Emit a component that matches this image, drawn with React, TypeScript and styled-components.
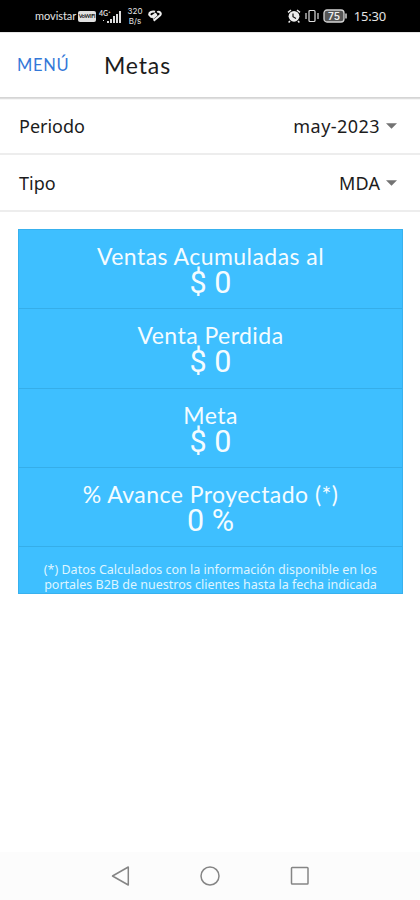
import React from "react";
import styled, { createGlobalStyle } from "styled-components";

const GlobalStyle = createGlobalStyle`
  * { box-sizing: border-box; }
  body { margin: 0; background: #fff; }
`;

const Screen = styled.div`
  width: 420px;
  height: 900px;
  display: flex;
  flex-direction: column;
  overflow: hidden;
  background: #fff;
  color: #1c1c1c;
  font-family: "Noto Sans", sans-serif;
`;

const StatusBar = styled.div`
  height: 32px;
  flex: none;
  padding: 0 34px 0 35px;
  display: flex;
  justify-content: space-between;
  background: #000;
  color: #e4e4e4;
`;

const StatusGroup = styled.div<{ $gap: number }>`
  display: flex;
  align-items: center;
  gap: ${(p) => p.$gap}px;
  svg { display: block; flex: none; }
`;

const Carrier = styled.span`
  width: 41px;
  font: 11px/14px Lato, sans-serif;
  letter-spacing: -0.05px;
  white-space: nowrap;
`;

const VoBadge = styled.span`
  width: 18px;
  height: 11px;
  border-radius: 2px;
  background: #e0e0e0;
  color: #111;
  font: 700 5.5px/11px Lato, sans-serif;
  letter-spacing: -0.2px;
  text-align: center;
  white-space: nowrap;
`;

const NetSpeed = styled.span`
  width: 16px;
  margin: 0 3px;
  font: 8px/10px Inter, sans-serif;
  text-align: center;
`;

const Clock = styled.span`
  margin-left: 3px;
  font: 13px/16px "Noto Sans", sans-serif;
  letter-spacing: -0.2px;
`;

const Header = styled.header`
  height: 65px;
  flex: none;
  padding-left: 17px;
  display: flex;
  align-items: center;
  border-top: 1px solid #e6e6e6;
`;

const MenuButton = styled.button`
  width: 87px;
  padding: 0;
  border: 0;
  background: none;
  color: #3478d8;
  font: 16.5px/24px Lato, sans-serif;
  letter-spacing: 0.7px;
  text-align: left;
`;

const Title = styled.h1`
  margin: 0;
  font: 400 23px/32px Lato, sans-serif;
  letter-spacing: 0.85px;
`;

const HeaderShadow = styled.div`
  height: 3px;
  flex: none;
  background: linear-gradient(#d5d5d5 0 1px, #dedede 1px 2px, #f6f6f6 2px);
`;

const FilterRow = styled.div<{ $height: number; $top?: number }>`
  height: ${(p) => p.$height}px;
  flex: none;
  padding: ${(p) => p.$top ?? 0}px 23px 1px 19px;
  display: flex;
  align-items: center;
  justify-content: space-between;
  border-bottom: 2px solid #ededed;
  font-size: 18px;
  line-height: 24px;
`;

const Value = styled.span<{ $spacing: number }>`
  display: flex;
  align-items: center;
  gap: 6px;
  letter-spacing: ${(p) => p.$spacing}px;
`;

const Card = styled.section`
  width: 385px;
  height: 365px;
  margin: 17px 0 0 18px;
  flex: none;
  overflow: hidden;
  background: #3ebfff;
  border: 1px solid #38b1ee;
  color: #f4fcff;
  text-align: center;
`;

const Metric = styled.div`
  height: 79.25px;
  padding-top: 14px;
  border-bottom: 1px solid #35aee9;
`;

const MetricName = styled.div`
  font: 23px/25px Lato, sans-serif;
  letter-spacing: 0.45px;
`;

const MetricValue = styled.div`
  font: 30.5px/27px Roboto, sans-serif;
`;

const Note = styled.p`
  margin: 15px 0 0;
  font-size: 12.5px;
  line-height: 15px;
  color: #dff5ff;
  white-space: nowrap;
`;

const NavBar = styled.nav`
  height: 48px;
  flex: none;
  margin-top: auto;
  padding: 0 110px;
  display: flex;
  align-items: center;
  justify-content: space-between;
  background: #fcfcfc;
  svg { display: block; }
`;

const Caret = () => (
  <svg width="11" height="6" viewBox="0 0 11 6"><path d="M0 .2h11L5.5 5.8z" fill="#737373" /></svg>
);

const metrics = [
  ["Ventas Acumuladas al", "$ 0"],
  ["Venta Perdida", "$ 0"],
  ["Meta", "$ 0"],
  ["% Avance Proyectado (*)", "0 %"],
];

export default function App() {
  return (
    <Screen>
      <GlobalStyle />
      <StatusBar>
        <StatusGroup $gap={2}>
          <Carrier>movistar</Carrier>
          <VoBadge>VoWiFi</VoBadge>
          <svg width="24" height="15" viewBox="0 0 24 15" fill="#dcdcdc">
            <text x="1" y="6.5" fontFamily="Lato" fontWeight="700" fontSize="7">4G⁺</text>
            <path d="M5 11h1v1H5zM9 12h2v2H9zM12 10h2v4h-2zM15 7h2v7h-2zM18 5h2v9h-2zM21 2h2v12h-2z" />
          </svg>
          <NetSpeed>320 B/s</NetSpeed>
          <svg width="14" height="12" viewBox="0 0 14 12" fill="none" stroke="#eee" strokeWidth="2.1" strokeLinejoin="round">
            <path d="M7 1.8C4.5.8.8 2.2 1.3 4.8L3.2 6.8 7.4 3.8 8.3 5.2 4.6 8.3" />
            <path d="M5.6 10.6 12.2 5.2C13.6 3.2 11.6.9 9.2 2.2" />
          </svg>
        </StatusGroup>
        <StatusGroup $gap={4}>
          <svg width="14" height="14" viewBox="0 0 14 14">
            <circle cx="7" cy="7.3" r="5.4" fill="#eee" />
            <path d="m1 3.4 3-2.4M13 3.4 10 1M3 12l-1.4 1.5M11 12l1.4 1.5" stroke="#eee" strokeWidth="1.5" />
            <path d="M6 4.5v3.2l3 1.8" stroke="#111" strokeWidth="1.2" fill="none" />
          </svg>
          <svg width="14" height="14" viewBox="0 0 14 14" fill="none" stroke="#ddd" strokeWidth="1.2">
            <rect x="4" y="1.5" width="6" height="11" rx="1" />
            <path d="M1 4v6M13 4v6" />
          </svg>
          <svg width="24" height="14" viewBox="0 0 24 14">
            <rect x="1" y="1" width="20" height="12" rx="3" fill="#555" stroke="#d5d5d5" strokeWidth="1.3" />
            <path d="M23 4.5v5" stroke="#d5d5d5" strokeWidth="1.5" />
            <text x="11" y="10.8" textAnchor="middle" fill="#eee" fontFamily="Inter" fontWeight="600" fontSize="10">75</text>
          </svg>
          <Clock>15:30</Clock>
        </StatusGroup>
      </StatusBar>
      <Header>
        <MenuButton>MENÚ</MenuButton>
        <Title>Metas</Title>
      </Header>
      <HeaderShadow />
      <FilterRow $height={55}>
        <span>Periodo</span>
        <Value $spacing={0.45}>may-2023 <Caret /></Value>
      </FilterRow>
      <FilterRow $height={57} $top={2}>
        <span>Tipo</span>
        <Value $spacing={0.1}>MDA <Caret /></Value>
      </FilterRow>
      <Card>
        {metrics.map(([name, value]) => (
          <Metric key={name}>
            <MetricName>{name}</MetricName>
            <MetricValue>{value}</MetricValue>
          </Metric>
        ))}
        <Note>
          (*) Datos Calculados con la información disponible en los<br />
          portales B2B de nuestros clientes hasta la fecha indicada
        </Note>
      </Card>
      <NavBar>
        <svg width="20" height="22" viewBox="0 0 20 22" fill="none" stroke="#858585" strokeWidth="1.5" strokeLinejoin="round">
          <path d="M18.3 2v18L2.5 11z" />
        </svg>
        <svg width="22" height="22" viewBox="0 0 22 22" fill="none" stroke="#858585" strokeWidth="1.5">
          <circle cx="11" cy="11" r="9" />
        </svg>
        <svg width="20" height="20" viewBox="0 0 20 20" fill="none" stroke="#858585" strokeWidth="1.5">
          <rect x="1.5" y="1.5" width="16.5" height="16.5" rx=".8" />
        </svg>
      </NavBar>
    </Screen>
  );
}
